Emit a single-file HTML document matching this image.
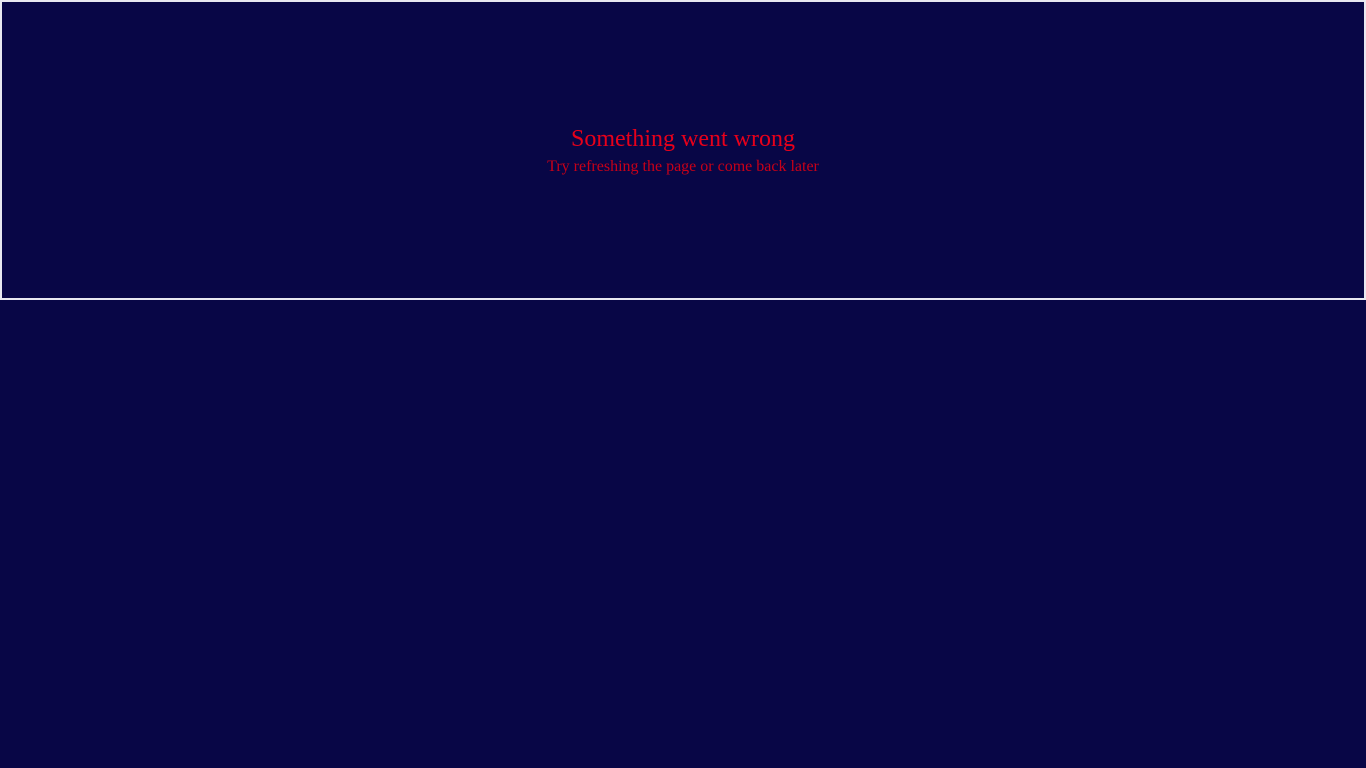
<!DOCTYPE html>
<html><head><style>
html,body{margin:0;padding:0;background:#080646;width:1366px;height:768px;overflow:hidden;}
.box{position:absolute;left:0;top:0;width:1362px;height:296px;border:2px solid #e8e8f0;}
.t{position:absolute;left:0;width:1366px;text-align:center;font-family:"Liberation Serif",serif;}
.a{top:124px;font-size:24px;color:#e8001a;line-height:30px;}
.b{top:157px;font-size:16px;color:#c80018;line-height:20px;}
</style></head><body>
<div class="box"></div>
<div class="t a">Something went wrong</div>
<div class="t b">Try refreshing the page or come back later</div>
</body></html>
